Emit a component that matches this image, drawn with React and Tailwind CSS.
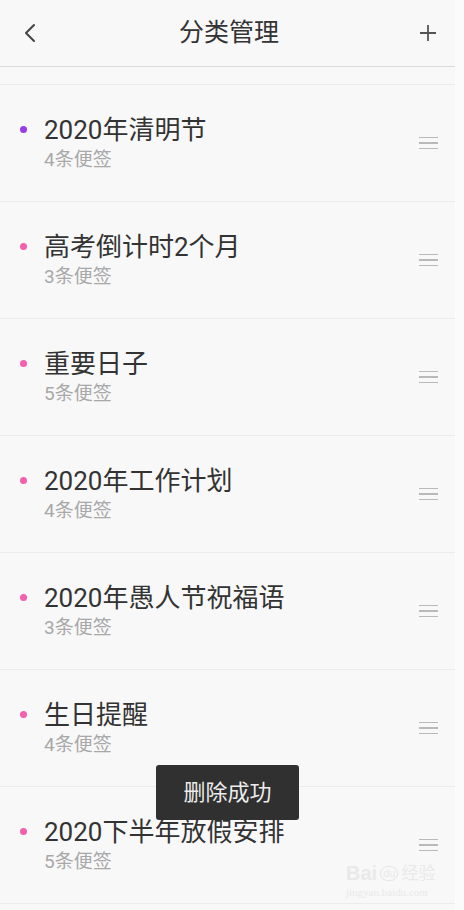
const FONT = { fontFamily: 'Roboto, "Noto Sans CJK SC", "Noto Sans", sans-serif' };

const ITEMS = [
  { title: '2020年清明节', count: 4, dot: 'bg-[#9b3de6]' },
  { title: '高考倒计时2个月', count: 3, dot: 'bg-[#f45fae]' },
  { title: '重要日子', count: 5, dot: 'bg-[#f45fae]' },
  { title: '2020年工作计划', count: 4, dot: 'bg-[#f45fae]' },
  { title: '2020年愚人节祝福语', count: 3, dot: 'bg-[#f45fae]' },
  { title: '生日提醒', count: 4, dot: 'bg-[#f45fae]' },
  { title: '2020下半年放假安排', count: 5, dot: 'bg-[#f45fae]' },
  { title: '', count: null, dot: '' },
];

function DragHandle() {
  return (
    <div className="flex w-[19px] flex-col gap-[4px]">
      <span className="h-[1.5px] bg-[#b9b9b9]" />
      <span className="h-[1.5px] bg-[#b9b9b9]" />
      <span className="h-[1.5px] bg-[#b9b9b9]" />
    </div>
  );
}

function Row({ item }) {
  return (
    <div className="flex h-[117px] shrink-0 items-center border-t border-[#ececec] pl-[20px] pr-[17px]">
      <div className="flex flex-1 flex-col">
        {item.title && (
          <div className="flex h-[30px] items-center">
            <span className={`h-[7px] w-[7px] rounded-full ${item.dot}`} />
            <span className="ml-[17px] text-[26px] leading-[30px] text-[#333]">{item.title}</span>
          </div>
        )}
        {item.count !== null && (
          <div className="ml-[24px] mt-[3px] text-[19px] leading-[24px] text-[#a8a8a8]">
            {item.count}条便签
          </div>
        )}
      </div>
      {item.title && <DragHandle />}
    </div>
  );
}

export default function App() {
  return (
    <div className="flex h-[910px] w-[464px] overflow-hidden bg-[#fbfbfb]" style={FONT}>
      <div className="relative flex w-[455px] shrink-0 flex-col bg-[#f8f8f9]">
        {/* Header */}
        <div className="flex h-[67px] shrink-0 items-center border-b border-[#dcdcdc] px-[20px]">
          <svg width="18" height="20" viewBox="0 0 18 20" className="ml-[1px]">
            <path d="M13 2 L5 10 L13 18" fill="none" stroke="#444" strokeWidth="2" strokeLinecap="round" strokeLinejoin="round" />
          </svg>
          <div className="flex-1 text-center text-[25px] leading-[32px] text-[#333]">分类管理</div>
          <svg width="18" height="18" viewBox="0 0 18 18" className="mr-[-2px]">
            <path d="M9 1 V17 M1 9 H17" fill="none" stroke="#555" strokeWidth="1.8" />
          </svg>
        </div>
        <div className="h-[17px] shrink-0" />

        {ITEMS.map((item, i) => (
          <Row key={i} item={item} />
        ))}

        {/* Toast */}
        <div className="absolute left-[156px] top-[765px] flex h-[55px] w-[143px] items-center justify-center rounded-[3px] bg-[#303030] text-[22px] text-[#ececec]">
          删除成功
        </div>

        {/* Watermark */}
        <div className="pointer-events-none absolute left-[346px] top-[862px] flex flex-col items-start text-[#e9e9e9]">
          <div className="flex items-end gap-[3px] leading-[22px]">
            <span className="text-[20px] font-bold" style={{ fontFamily: '"Liberation Sans", sans-serif' }}>Bai</span>
            <span className="mb-[3px] rounded-full border border-[#e4e4e4] px-[2px] text-[11px] leading-[13px]">du</span>
            <span className="text-[17px]">经验</span>
          </div>
          <div className="text-[11px] leading-[16px]" style={{ fontFamily: '"Liberation Serif", serif' }}>
            jingyan.baidu.com
          </div>
        </div>
      </div>
      <div className="flex-1" />
    </div>
  );
}
